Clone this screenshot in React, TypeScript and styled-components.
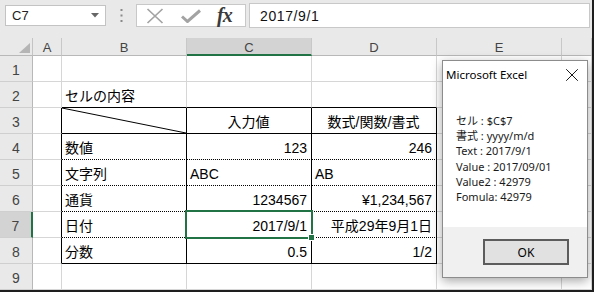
import React from "react";
import styled, { createGlobalStyle } from "styled-components";
import { X } from "lucide-react";

type Line = "g" | "s" | "d";
type Align = "left" | "right" | "center";

interface CellDef {
  text?: string;
  align?: Align;
  r?: Line;
  b?: Line;
  diag?: boolean;
  selected?: boolean;
}

const GlobalStyle = createGlobalStyle`
  html, body {
    margin: 0;
    padding: 0;
    background: #ffffff;
  }
  body {
    font-family: "Liberation Sans", "Noto Sans CJK JP", sans-serif;
    color: #000;
  }
`;

const lineStyle = (l?: Line) =>
  l === "s" ? "1px solid #000" : l === "d" ? "1px dotted #000" : "1px solid #d6d6d6";

const COLUMNS = ["A", "B", "C", "D", "E", ""];

// rows 1..9, each with cells for A..F
const ROWS: CellDef[][] = [
  [{}, {}, {}, {}, {}, {}],
  [{}, { text: "セルの内容", b: "s" }, { b: "s" }, { b: "s" }, {}, {}],
  [
    { r: "s" },
    { diag: true, r: "s", b: "s" },
    { text: "入力値", align: "center", r: "s", b: "s" },
    { text: "数式/関数/書式", align: "center", r: "s", b: "s" },
    {},
    {},
  ],
  [
    { r: "s" },
    { text: "数値", r: "s", b: "d" },
    { text: "123", align: "right", r: "s", b: "d" },
    { text: "246", align: "right", r: "s", b: "d" },
    {},
    {},
  ],
  [
    { r: "s" },
    { text: "文字列", r: "s", b: "d" },
    { text: "ABC", r: "s", b: "d" },
    { text: "AB", r: "s", b: "d" },
    {},
    {},
  ],
  [
    { r: "s" },
    { text: "通貨", r: "s", b: "d" },
    { text: "1234567", align: "right", r: "s", b: "d" },
    { text: "¥1,234,567", align: "right", r: "s", b: "d" },
    {},
    {},
  ],
  [
    { r: "s" },
    { text: "日付", r: "s", b: "d" },
    { text: "2017/9/1", align: "right", r: "s", b: "d", selected: true },
    { text: "平成29年9月1日", align: "right", r: "s", b: "d" },
    {},
    {},
  ],
  [
    { r: "s" },
    { text: "分数", r: "s", b: "s" },
    { text: "0.5", align: "right", r: "s", b: "s" },
    { text: "1/2", align: "right", r: "s", b: "s" },
    {},
    {},
  ],
  [{}, {}, {}, {}, {}, {}],
];

const MESSAGE = [
  "セル : $C$7",
  "書式 : yyyy/m/d",
  "Text : 2017/9/1",
  "Value : 2017/09/01",
  "Value2 : 42979",
  "Fomula: 42979",
];

const App: React.FC = () => {
  return (
    <>
      <GlobalStyle />
      <Frame>
        <Toolbar>
          <NameBox>
            <span>C7</span>
            <svg width="8" height="5" viewBox="0 0 8 5">
              <path d="M0 0h8L4 4.5z" fill="#666" />
            </svg>
          </NameBox>
          <Grip width="3" height="13" viewBox="0 0 3 13">
            <rect x="0.5" y="0" width="2" height="2" fill="#8a8a8a" />
            <rect x="0.5" y="5.5" width="2" height="2" fill="#8a8a8a" />
            <rect x="0.5" y="11" width="2" height="2" fill="#8a8a8a" />
          </Grip>
          <FxBox>
            <svg width="18" height="16" viewBox="0 0 18 16">
              <path d="M1.5 1 16.5 15M16.5 1 1.5 15" stroke="#a3a3a3" strokeWidth="1.7" fill="none" />
            </svg>
            <svg width="20" height="14" viewBox="0 0 20 14">
              <path d="M1 7.5 6.5 12.5 19 1.5" stroke="#a3a3a3" strokeWidth="3" fill="none" />
            </svg>
            <FxLabel>fx</FxLabel>
          </FxBox>
          <FormulaInput>2017/9/1</FormulaInput>
        </Toolbar>

        <Sheet>
          <Corner>
            <svg width="11" height="10" viewBox="0 0 11 10">
              <path d="M11 0v10H0z" fill="#b5b5b5" />
            </svg>
          </Corner>
          {COLUMNS.map((c) => (
            <ColHead key={`h${c}`} $sel={c === "C"}>
              {c}
            </ColHead>
          ))}
          {ROWS.map((row, ri) => (
            <React.Fragment key={ri}>
              <RowHead $sel={ri === 6}>{ri + 1}</RowHead>
              {row.map((cell, ci) => (
                <Cell key={ci} $r={cell.r} $b={cell.b} $align={cell.align}>
                  {cell.diag && (
                    <Diagonal viewBox="0 0 100 100" preserveAspectRatio="none">
                      <line x1="0" y1="0" x2="100" y2="100" stroke="#000" strokeWidth="1" vectorEffect="non-scaling-stroke" />
                    </Diagonal>
                  )}
                  {cell.text}
                  {cell.selected && (
                    <Selection>
                      <Handle />
                    </Selection>
                  )}
                </Cell>
              ))}
            </React.Fragment>
          ))}
        </Sheet>

        <Dialog>
          <TitleBar>
            <span>Microsoft Excel</span>
            <X size={22} strokeWidth={1} absoluteStrokeWidth color="#1a1a1a" />
          </TitleBar>
          <DialogBody>
            {MESSAGE.map((m) => (
              <div key={m}>{m}</div>
            ))}
          </DialogBody>
          <DialogFooter>
            <OkButton>OK</OkButton>
          </DialogFooter>
        </Dialog>
      </Frame>
    </>
  );
};

const Frame = styled.div`
  position: relative;
  width: 594px;
  height: 292px;
  box-sizing: border-box;
  border-right: 2px solid #1e1e1e;
  border-bottom: 2px solid #1e1e1e;
  overflow: hidden;
  background: #fff;
`;

const Toolbar = styled.div`
  height: 38px;
  box-sizing: border-box;
  padding: 0 2px 7px 5px;
  display: flex;
  align-items: center;
  background: #e9e9e9;
`;

const NameBox = styled.div`
  width: 101px;
  height: 21px;
  box-sizing: border-box;
  background: #fff;
  border: 1px solid #c3c3c3;
  display: flex;
  align-items: center;
  justify-content: space-between;
  padding: 0 6px 0 6px;
  font-size: 13px;
  color: #222;
`;

const Grip = styled.svg`
  margin-left: 14px;
`;

const FxBox = styled.div`
  margin-left: 13px;
  width: 110px;
  height: 23px;
  box-sizing: border-box;
  background: #fff;
  border: 1px solid #c8c8c8;
  display: flex;
  align-items: center;
  padding-left: 9px;
  gap: 17px;
`;

const FxLabel = styled.span`
  font-family: "Liberation Serif", "DejaVu Serif", serif;
  font-style: italic;
  font-weight: bold;
  font-size: 20px;
  color: #3a3a3a;
  margin-left: -1px;
  letter-spacing: -1px;
`;

const FormulaInput = styled.div`
  flex: 1;
  margin-left: 3px;
  height: 25px;
  box-sizing: border-box;
  background: #fff;
  border: 1px solid #c8c8c8;
  display: flex;
  align-items: center;
  padding-left: 10px;
  font-size: 14px;
  letter-spacing: 0.6px;
  color: #111;
`;

const Sheet = styled.div`
  display: grid;
  grid-template-columns: 33px 29px 125px 125px 125px 125px 1fr;
  grid-template-rows: 18px repeat(9, 26px);
`;

const Corner = styled.div`
  display: flex;
  align-items: flex-end;
  justify-content: flex-end;
  padding: 0 2px 2px 0;
  background: #e9e9e9;
  border-right: 1px solid #c4c4c4;
  border-bottom: 1px solid #b8b8b8;
`;

const ColHead = styled.div<{ $sel?: boolean }>`
  display: flex;
  align-items: center;
  justify-content: center;
  padding-top: 2px;
  box-sizing: border-box;
  background: ${(p) => (p.$sel ? "#d3d3d3" : "#e9e9e9")};
  border-right: 1px solid #c8c8c8;
  border-bottom: ${(p) => (p.$sel ? "2px solid #217346" : "1px solid #b8b8b8")};
  font-size: 13px;
  color: #444;
`;

const RowHead = styled.div<{ $sel?: boolean }>`
  display: flex;
  align-items: flex-end;
  justify-content: center;
  padding-bottom: 3px;
  box-sizing: border-box;
  background: ${(p) => (p.$sel ? "#d3d3d3" : "#e9e9e9")};
  border-right: ${(p) => (p.$sel ? "2px solid #217346" : "1px solid #b8b8b8")};
  border-bottom: 1px solid #cfcfcf;
  font-size: 14px;
  color: #444;
`;

const Cell = styled.div<{ $r?: Line; $b?: Line; $align?: Align }>`
  position: relative;
  display: flex;
  align-items: flex-end;
  justify-content: ${(p) =>
    p.$align === "right" ? "flex-end" : p.$align === "center" ? "center" : "flex-start"};
  box-sizing: border-box;
  padding: 0 4px 4px 3px;
  border-right: ${(p) => lineStyle(p.$r)};
  border-bottom: ${(p) => lineStyle(p.$b)};
  font-size: 14px;
  line-height: 14px;
  white-space: nowrap;
`;

const Diagonal = styled.svg`
  position: absolute;
  inset: 0;
  width: 100%;
  height: 100%;
`;

const Selection = styled.div`
  position: absolute;
  left: -2px;
  top: -2px;
  right: -2px;
  bottom: -2px;
  border: 2px solid #217346;
  z-index: 2;
`;

const Handle = styled.div`
  position: absolute;
  right: -4px;
  bottom: -4px;
  width: 5px;
  height: 5px;
  background: #217346;
  border: 1px solid #fff;
`;

const Dialog = styled.div`
  position: absolute;
  left: 442px;
  top: 60px;
  width: 146px;
  height: 218px;
  box-sizing: border-box;
  display: flex;
  flex-direction: column;
  background: #fff;
  border: 1px solid #8c8c8c;
  box-shadow: 0 3px 10px rgba(0, 0, 0, 0.35);
  z-index: 5;
  font-family: "Noto Sans", "Noto Sans CJK JP", sans-serif;
  font-size: 11px;
  color: #1a1a1a;
`;

const TitleBar = styled.div`
  height: 27px;
  display: flex;
  align-items: center;
  justify-content: space-between;
  padding: 0 4px 0 3px;
  font-size: 11.5px;
  color: #000;
`;

const DialogBody = styled.div`
  flex: 1;
  padding: 25px 0 0 13px;
  line-height: 15.2px;
`;

const DialogFooter = styled.div`
  height: 50px;
  box-sizing: border-box;
  background: #f0f0f0;
  display: flex;
  justify-content: flex-end;
  align-items: flex-start;
  padding: 12px 18px 0 0;
`;

const OkButton = styled.div`
  width: 86px;
  height: 26px;
  box-sizing: border-box;
  background: #e1e1e1;
  border: 2px solid #5c5c5c;
  display: flex;
  align-items: center;
  justify-content: center;
  font-size: 12px;
  color: #000;
`;

export default App;
